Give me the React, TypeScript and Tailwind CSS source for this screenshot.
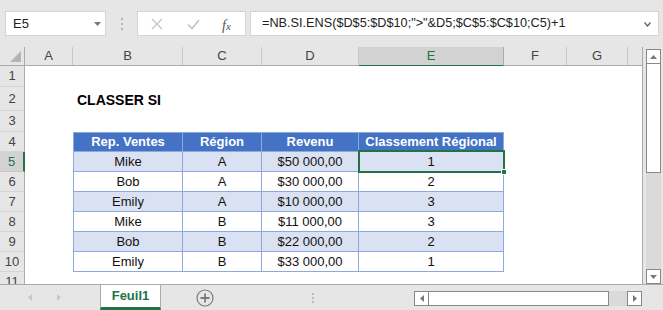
import React from 'react';

const GREEN = '#217346';

// column widths include the 1px right separator
const COLS = [
  { id: 'A', w: 'w-[48px]' },
  { id: 'B', w: 'w-[110px]' },
  { id: 'C', w: 'w-[79px]' },
  { id: 'D', w: 'w-[97px]' },
  { id: 'E', w: 'w-[145px]' },
  { id: 'F', w: 'w-[63px]' },
  { id: 'G', w: 'w-[61px]' },
];

const ROW_H: Record<number, string> = {
  1: 'h-[21px]',
  2: 'h-[24px]',
  3: 'h-[21px]',
};

const DATA = [
  ['Mike', 'A', '$50 000,00', '1'],
  ['Bob', 'A', '$30 000,00', '2'],
  ['Emily', 'A', '$10 000,00', '3'],
  ['Mike', 'B', '$11 000,00', '3'],
  ['Bob', 'B', '$22 000,00', '2'],
  ['Emily', 'B', '$33 000,00', '1'],
];

const FORMULA = '=NB.SI.ENS($D$5:$D$10;">"&D5;$C$5:$C$10;C5)+1';

function TopBar() {
  return (
    <div className="h-[47px] flex items-start pt-[11px] shrink-0">
      <div className="ml-[5px] w-[101px] h-[25px] bg-white border border-[#d4d4d4] flex items-center pl-[7px] relative">
        <span className="text-[13px] text-[#222]">E5</span>
        <svg className="absolute left-[88px] top-[10px]" width="7" height="4" viewBox="0 0 7 4">
          <path d="M0 0 H7 L3.5 4 Z" fill="#777" />
        </svg>
      </div>
      <div className="w-[31px] h-[25px] flex flex-col items-center justify-center gap-[3px]">
        <div className="w-[2px] h-[2px] bg-[#b4b4b4]" />
        <div className="w-[2px] h-[2px] bg-[#b4b4b4]" />
        <div className="w-[2px] h-[2px] bg-[#b4b4b4]" />
      </div>
      <div className="w-[109px] h-[25px] bg-white border border-[#d4d4d4] relative">
        <svg className="absolute left-[13px] top-[6px]" width="12" height="12" viewBox="0 0 12 12">
          <path d="M1 1 L11 11 M11 1 L1 11" stroke="#c2c2c2" strokeWidth="1.3" fill="none" />
        </svg>
        <svg className="absolute left-[49px] top-[6px]" width="13" height="12" viewBox="0 0 13 12">
          <path d="M1 6.5 L5 10.5 L12 2" stroke="#c2c2c2" strokeWidth="1.6" fill="none" />
        </svg>
        <span className="absolute left-[84px] top-[3px] text-[14px] italic text-[#555] font-['Liberation_Serif',serif]">
          f<span className="text-[11px]">x</span>
        </span>
      </div>
      <div className="ml-[4px] w-[409px] h-[25px] bg-white border border-[#d4d4d4] flex items-center pl-[11px] relative">
        <span className="text-[12.7px] text-[#222] whitespace-nowrap">{FORMULA}</span>
        <svg className="absolute right-[7px] top-[10px]" width="7" height="5" viewBox="0 0 7 5">
          <path d="M0.5 0.5 L3.5 4 L6.5 0.5" stroke="#666" strokeWidth="1.4" fill="none" />
        </svg>
      </div>
    </div>
  );
}

function ColumnHeader() {
  return (
    <div className="flex h-[19px] shrink-0 border-b border-[#ababab] text-[13px] text-[#444]">
      <div className="w-[25px] border-r border-[#ababab] relative">
        <svg className="absolute right-[3px] bottom-[3px]" width="11" height="11" viewBox="0 0 11 11">
          <path d="M11 0 V11 H0 Z" fill="#b4b4b4" />
        </svg>
      </div>
      {COLS.map((c) =>
        c.id === 'E' ? (
          <div
            key={c.id}
            className={`${c.w} h-[20px] bg-[#d2d2d2] border-r border-[#ababab] border-b-2 border-b-[#217346] flex items-center justify-center text-[#217346]`}
          >
            {c.id}
          </div>
        ) : (
          <div
            key={c.id}
            className={`${c.w} border-r border-[#c8c8c8] flex items-center justify-center`}
          >
            {c.id}
          </div>
        )
      )}
      <div className="flex-1" />
    </div>
  );
}

function RowHeader({ n, active }: { n: number; active?: boolean }) {
  return active ? (
    <div className="w-[25px] shrink-0 bg-[#d2d2d2] border-r-2 border-[#217346] border-b border-b-[#c8c8c8] flex items-center justify-center text-[13px] text-[#217346]">
      {n}
    </div>
  ) : (
    <div className="w-[25px] shrink-0 bg-[#e6e6e6] border-r border-[#ababab] border-b border-b-[#d4d4d4] flex items-center justify-center text-[13px] text-[#444]">
      {n}
    </div>
  );
}

function EmptyRow({ n, h, children }: { n: number; h: string; children?: React.ReactNode }) {
  return (
    <div className={`flex ${h} shrink-0`}>
      <RowHeader n={n} />
      <div className="flex-1 bg-white relative">{children}</div>
    </div>
  );
}

function TableRow({ n, cells, head }: { n: number; cells: string[]; head?: boolean }) {
  const stripe = head ? 'bg-[#4472c4] text-white font-bold' : n % 2 === 1 ? 'bg-[#d9e1f2] text-[#111]' : 'bg-white text-[#111]';
  const top = head ? 'border-t' : '';
  return (
    <div className="flex h-[20px] shrink-0">
      <RowHeader n={n} active={n === 5} />
      <div className="w-[48px] bg-white" />
      <div className={`w-[110px] ${stripe} ${top} border-l border-r border-b border-[#8ea9db] flex items-center justify-center text-[13px]`}>
        {cells[0]}
      </div>
      <div className={`w-[79px] ${stripe} ${top} border-r border-b border-[#8ea9db] flex items-center justify-center text-[13px]`}>
        {cells[1]}
      </div>
      <div className={`w-[97px] ${stripe} ${top} border-r border-b border-[#8ea9db] flex items-center justify-center text-[13px]`}>
        {cells[2]}
      </div>
      <div className={`w-[145px] ${stripe} ${top} border-r border-b border-[#8ea9db] flex items-center justify-center text-[13px] relative`}>
        {cells[3]}
        {n === 5 && (
          <div className="absolute left-[-1px] top-[-2px] w-[147px] h-[23px] border-2 border-[#217346] z-10">
            <div className="absolute right-[-4px] bottom-[-4px] w-[6px] h-[6px] bg-[#217346] border border-white" />
          </div>
        )}
      </div>
      <div className="flex-1 bg-white" />
    </div>
  );
}

function Sheet() {
  return (
    <div className="w-[643px] flex flex-col border-r border-[#ababab] overflow-hidden">
      <ColumnHeader />
      <EmptyRow n={1} h={ROW_H[1]} />
      <EmptyRow n={2} h={ROW_H[2]}>
        <span className="absolute left-[52px] top-[3px] text-[14px] font-bold text-black">CLASSER SI</span>
      </EmptyRow>
      <EmptyRow n={3} h={ROW_H[3]} />
      <TableRow n={4} head cells={['Rep. Ventes', 'Région', 'Revenu', 'Classement Régional']} />
      {DATA.map((r, i) => (
        <TableRow key={i} n={i + 5} cells={r} />
      ))}
      <EmptyRow n={11} h="h-[20px]" />
    </div>
  );
}

function VScroll() {
  return (
    <div className="ml-[3px] w-[15px] flex flex-col pt-[2px]">
      <div className="h-[15px] bg-white border border-[#888] flex items-center justify-center">
        <svg width="7" height="4" viewBox="0 0 7 4">
          <path d="M0 4 H7 L3.5 0 Z" fill="#777" />
        </svg>
      </div>
      <div className="h-[109px] bg-white border border-t-0 border-[#888]" />
      <div className="flex-1 bg-[#dadada]" />
      <div className="h-[15px] bg-white border border-[#888] flex items-center justify-center">
        <svg width="7" height="4" viewBox="0 0 7 4">
          <path d="M0 0 H7 L3.5 4 Z" fill="#777" />
        </svg>
      </div>
    </div>
  );
}

function TabBar() {
  return (
    <div className="h-[26px] shrink-0 border-t border-[#ababab] flex items-start relative">
      <div className="w-[100px] h-full flex items-center">
        <svg className="ml-[28px]" width="4" height="7" viewBox="0 0 4 7">
          <path d="M4 0 V7 L0 3.5 Z" fill="#c6c6c6" />
        </svg>
        <svg className="ml-[25px]" width="4" height="7" viewBox="0 0 4 7">
          <path d="M0 0 V7 L4 3.5 Z" fill="#c6c6c6" />
        </svg>
      </div>
      <div className="w-[61px] h-[25px] bg-white border-x border-[#ababab] border-b-[3px] border-b-[#217346] flex items-center justify-center">
        <span className="text-[13px] font-bold text-[#217346]">Feuil1</span>
      </div>
      <div className="w-[53px] h-full flex items-center justify-end">
        <svg width="18" height="18" viewBox="0 0 18 18">
          <circle cx="9" cy="9" r="8" fill="none" stroke="#7a7a7a" strokeWidth="1.2" />
          <path d="M9 4.5 V13.5 M4.5 9 H13.5" stroke="#7a7a7a" strokeWidth="1.8" />
        </svg>
      </div>
      <div className="w-[100px] h-full flex flex-col items-end justify-center gap-[2px]">
        <div className="w-[2px] h-[2px] bg-[#bcbcbc]" />
        <div className="w-[2px] h-[2px] bg-[#bcbcbc]" />
        <div className="w-[2px] h-[2px] bg-[#bcbcbc]" />
      </div>
      <div className="ml-[100px] mt-[6px] flex h-[15px]">
        <div className="w-[15px] bg-white border border-[#888] flex items-center justify-center">
          <svg width="4" height="7" viewBox="0 0 4 7">
            <path d="M4 0 V7 L0 3.5 Z" fill="#777" />
          </svg>
        </div>
        <div className="w-[180px] bg-white border-y border-r border-[#888]" />
        <div className="w-[18px] bg-[#dadada]" />
        <div className="w-[15px] bg-white border border-[#888] flex items-center justify-center">
          <svg width="4" height="7" viewBox="0 0 4 7">
            <path d="M0 0 V7 L4 3.5 Z" fill="#777" />
          </svg>
        </div>
      </div>
    </div>
  );
}

export default function App() {
  return (
    <div className="w-[663px] h-[310px] bg-[#e6e6e6] overflow-hidden flex flex-col font-['Liberation_Sans',Arial,sans-serif]">
      <TopBar />
      <div className="flex h-[237px] shrink-0">
        <Sheet />
        <VScroll />
      </div>
      <TabBar />
    </div>
  );
}
